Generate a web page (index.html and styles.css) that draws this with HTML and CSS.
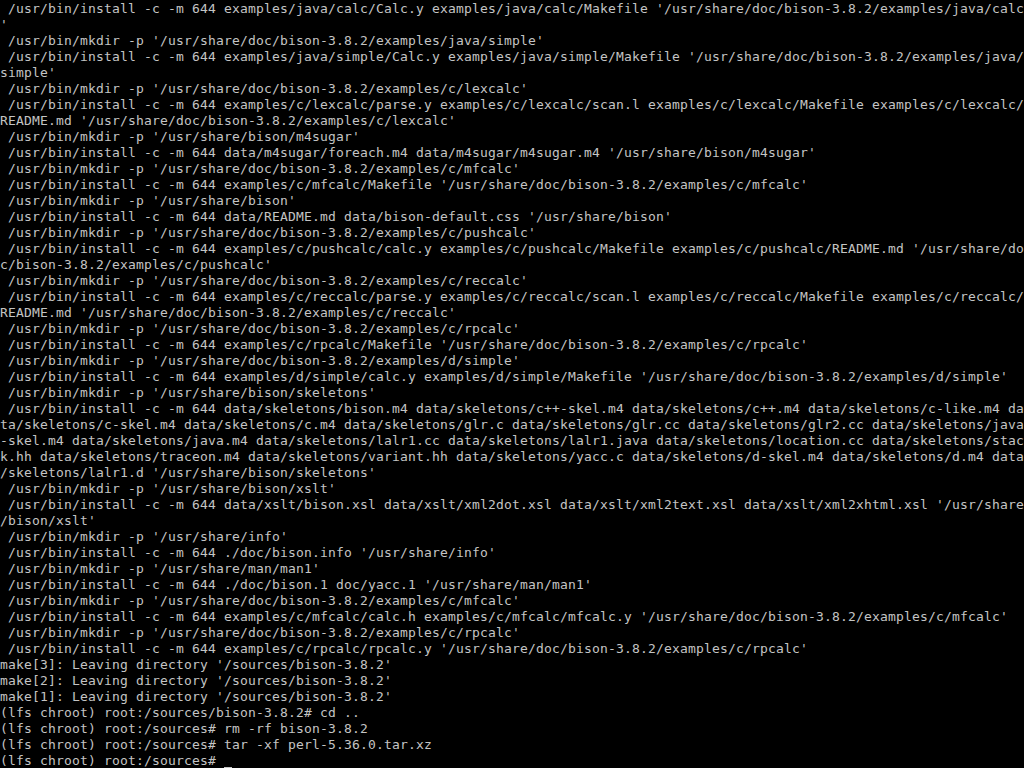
FILE: index.html
```html
<!DOCTYPE html>
<html>
<head>
<meta charset="utf-8">
<title>lfs chroot console</title>
<link rel="stylesheet" href="styles.css">
</head>
<body>
<pre class="screen"> /usr/bin/install -c -m 644 examples/java/calc/Calc.y examples/java/calc/Makefile '/usr/share/doc/bison-3.8.2/examples/java/calc
'
 /usr/bin/mkdir -p '/usr/share/doc/bison-3.8.2/examples/java/simple'
 /usr/bin/install -c -m 644 examples/java/simple/Calc.y examples/java/simple/Makefile '/usr/share/doc/bison-3.8.2/examples/java/
simple'
 /usr/bin/mkdir -p '/usr/share/doc/bison-3.8.2/examples/c/lexcalc'
 /usr/bin/install -c -m 644 examples/c/lexcalc/parse.y examples/c/lexcalc/scan.l examples/c/lexcalc/Makefile examples/c/lexcalc/
README.md '/usr/share/doc/bison-3.8.2/examples/c/lexcalc'
 /usr/bin/mkdir -p '/usr/share/bison/m4sugar'
 /usr/bin/install -c -m 644 data/m4sugar/foreach.m4 data/m4sugar/m4sugar.m4 '/usr/share/bison/m4sugar'
 /usr/bin/mkdir -p '/usr/share/doc/bison-3.8.2/examples/c/mfcalc'
 /usr/bin/install -c -m 644 examples/c/mfcalc/Makefile '/usr/share/doc/bison-3.8.2/examples/c/mfcalc'
 /usr/bin/mkdir -p '/usr/share/bison'
 /usr/bin/install -c -m 644 data/README.md data/bison-default.css '/usr/share/bison'
 /usr/bin/mkdir -p '/usr/share/doc/bison-3.8.2/examples/c/pushcalc'
 /usr/bin/install -c -m 644 examples/c/pushcalc/calc.y examples/c/pushcalc/Makefile examples/c/pushcalc/README.md '/usr/share/do
c/bison-3.8.2/examples/c/pushcalc'
 /usr/bin/mkdir -p '/usr/share/doc/bison-3.8.2/examples/c/reccalc'
 /usr/bin/install -c -m 644 examples/c/reccalc/parse.y examples/c/reccalc/scan.l examples/c/reccalc/Makefile examples/c/reccalc/
README.md '/usr/share/doc/bison-3.8.2/examples/c/reccalc'
 /usr/bin/mkdir -p '/usr/share/doc/bison-3.8.2/examples/c/rpcalc'
 /usr/bin/install -c -m 644 examples/c/rpcalc/Makefile '/usr/share/doc/bison-3.8.2/examples/c/rpcalc'
 /usr/bin/mkdir -p '/usr/share/doc/bison-3.8.2/examples/d/simple'
 /usr/bin/install -c -m 644 examples/d/simple/calc.y examples/d/simple/Makefile '/usr/share/doc/bison-3.8.2/examples/d/simple'
 /usr/bin/mkdir -p '/usr/share/bison/skeletons'
 /usr/bin/install -c -m 644 data/skeletons/bison.m4 data/skeletons/c++-skel.m4 data/skeletons/c++.m4 data/skeletons/c-like.m4 da
ta/skeletons/c-skel.m4 data/skeletons/c.m4 data/skeletons/glr.c data/skeletons/glr.cc data/skeletons/glr2.cc data/skeletons/java
-skel.m4 data/skeletons/java.m4 data/skeletons/lalr1.cc data/skeletons/lalr1.java data/skeletons/location.cc data/skeletons/stac
k.hh data/skeletons/traceon.m4 data/skeletons/variant.hh data/skeletons/yacc.c data/skeletons/d-skel.m4 data/skeletons/d.m4 data
/skeletons/lalr1.d '/usr/share/bison/skeletons'
 /usr/bin/mkdir -p '/usr/share/bison/xslt'
 /usr/bin/install -c -m 644 data/xslt/bison.xsl data/xslt/xml2dot.xsl data/xslt/xml2text.xsl data/xslt/xml2xhtml.xsl '/usr/share
/bison/xslt'
 /usr/bin/mkdir -p '/usr/share/info'
 /usr/bin/install -c -m 644 ./doc/bison.info '/usr/share/info'
 /usr/bin/mkdir -p '/usr/share/man/man1'
 /usr/bin/install -c -m 644 ./doc/bison.1 doc/yacc.1 '/usr/share/man/man1'
 /usr/bin/mkdir -p '/usr/share/doc/bison-3.8.2/examples/c/mfcalc'
 /usr/bin/install -c -m 644 examples/c/mfcalc/calc.h examples/c/mfcalc/mfcalc.y '/usr/share/doc/bison-3.8.2/examples/c/mfcalc'
 /usr/bin/mkdir -p '/usr/share/doc/bison-3.8.2/examples/c/rpcalc'
 /usr/bin/install -c -m 644 examples/c/rpcalc/rpcalc.y '/usr/share/doc/bison-3.8.2/examples/c/rpcalc'
make[3]: Leaving directory '/sources/bison-3.8.2'
make[2]: Leaving directory '/sources/bison-3.8.2'
make[1]: Leaving directory '/sources/bison-3.8.2'
(lfs chroot) root:/sources/bison-3.8.2# cd ..
(lfs chroot) root:/sources# rm -rf bison-3.8.2
(lfs chroot) root:/sources# tar -xf perl-5.36.0.tar.xz
(lfs chroot) root:/sources# <span class="cursor"></span></pre>
</body>
</html>
```

FILE: styles.css
```css
html, body {
  margin: 0;
  padding: 0;
  background: #000;
}

body {
  width: 1024px;
  height: 768px;
  overflow: hidden;
}

.screen {
  margin: 0;
  padding: 1px 0 0 0;
  font-family: "DejaVu Sans Mono", monospace;
  font-size: 13px;
  letter-spacing: 0.173px;
  line-height: 16px;
  color: #c4c4c4;
  white-space: pre;
}

.cursor {
  display: inline-block;
  width: 8px;
  height: 16px;
  vertical-align: top;
  box-shadow: inset 0 -2px 0 #c4c4c4;
}
```
